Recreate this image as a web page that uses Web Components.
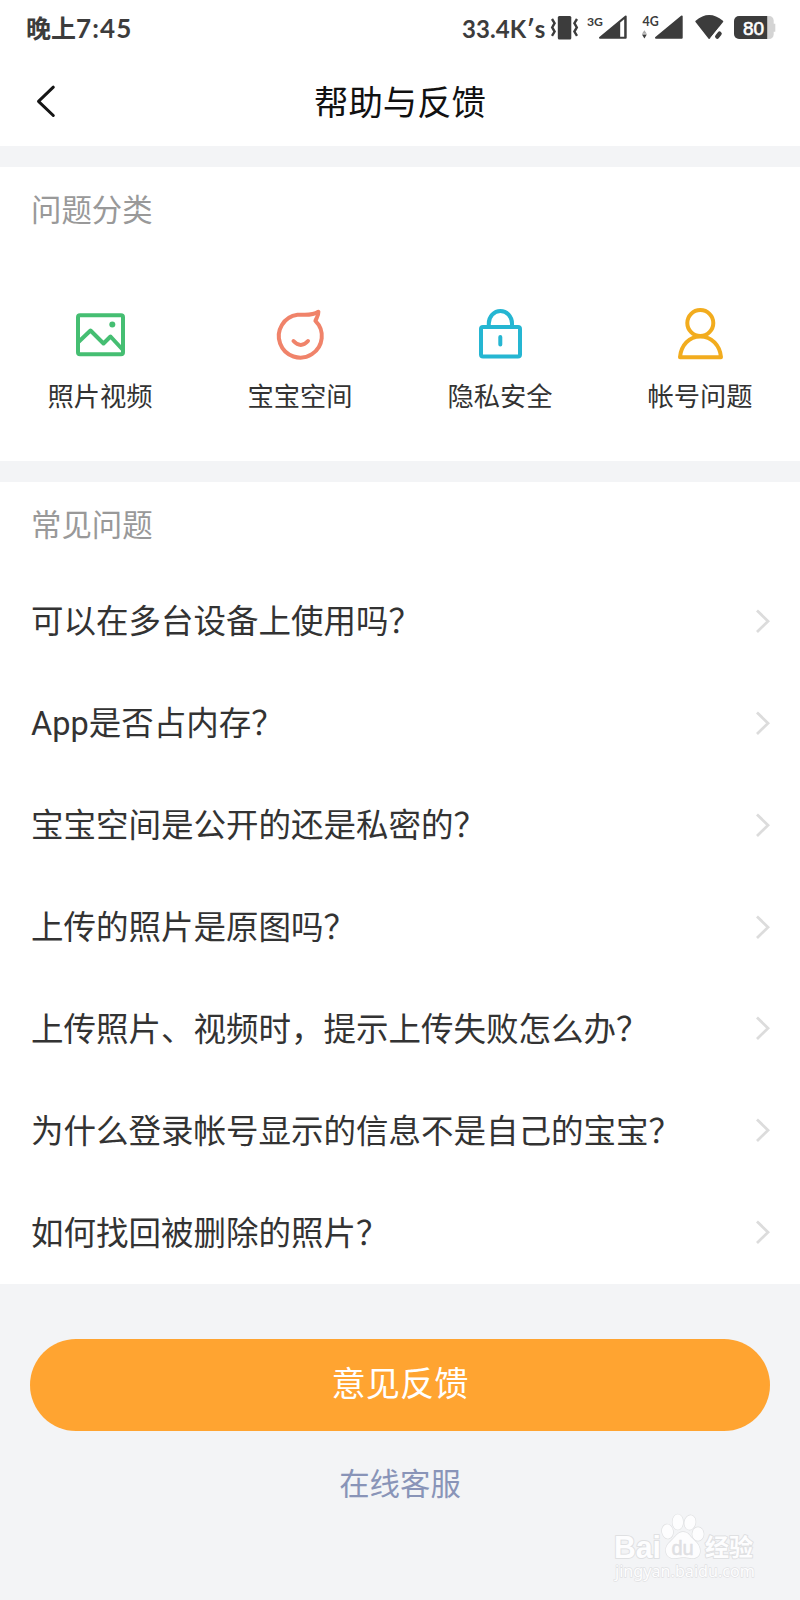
<!DOCTYPE html>
<html lang="zh-CN">
<head>
<meta charset="utf-8">
<title>帮助与反馈</title>
<style>
body{margin:0;background:#f3f4f6;font-family:Roboto,"Noto Sans CJK SC",sans-serif;color:#333}
</style>
</head>
<body>
<help-page></help-page>
<script>
const define = (name, html) => {
  const t = document.createElement('template');
  t.innerHTML = html;
  customElements.define(name, class extends HTMLElement {
    constructor() {
      super();
      this.attachShadow({mode: 'open'}).append(t.content.cloneNode(true));
    }
  });
};

define('status-bar', `
<style>
:host{display:flex;height:57px;align-items:center;box-sizing:border-box;padding-left:26px;color:#3c3c3c;background:#fff}
.time{font:700 25px/57px Lato,"Noto Sans CJK SC",sans-serif;white-space:nowrap;flex:1}
.time b{font-weight:700;font-size:26px;letter-spacing:1.1px}
.rate{font:700 24px/57px Lato,sans-serif;letter-spacing:.1px;width:84px;white-space:nowrap}
svg{display:block}
</style>
<div class="time">晚上<b>7:45</b></div>
<div class="rate">33.4K′s</div>
<svg width="254" height="57" viewBox="546 0 254 57" fill="#3c3c3c">
  <rect x="557.8" y="16" width="13.5" height="23.5" rx="1.5"/>
  <path d="M552 19l2.6 4.2-2.4 4.2 2.4 4.2-2.6 4.2M577 19l-2.6 4.2 2.4 4.2-2.4 4.2 2.6 4.2" fill="none" stroke="#3c3c3c" stroke-width="2.4"/>
  <text x="587" y="26" font-family="Lato" font-weight="700" font-size="12.2">3G</text>
  <path d="M600 37.7L625.7 16.5V37.7Z" stroke="#3c3c3c" stroke-width="2" stroke-linejoin="round"/>
  <path d="M620.2 22.4l4-3.2v17.6h-4z" fill="#fff"/>
  <text x="642.5" y="26" font-family="Lato" font-weight="700" font-size="12.4">4G</text>
  <path d="M642 33.8l2.4-3.5 2.4 3.5z" fill="#aaa"/><path d="M642 34.5h4.8l-2.4 4z"/>
  <path d="M656 37.7L681.7 16.5V37.7Z" stroke="#3c3c3c" stroke-width="2" stroke-linejoin="round"/>
  <path d="M696.3 21.5Q709 10.5 722.3 21.5L709.2 38Z" stroke="#3c3c3c" stroke-width="2" stroke-linejoin="round"/>
  <path d="M714 40.5l9-11" stroke="#fff" stroke-width="9"/>
  <path d="M717.2 36.6l2.4-3" stroke="#3c3c3c" stroke-width="4.3" stroke-linecap="round"/>
  <path d="M766 16h3a5 5 0 0 1 4.7 4.5v3.2h1.6v8h-1.6v2.8a5 5 0 0 1-4.7 4.5h-3z" fill="#d4d4d4"/>
  <path d="M739 16h28.2v23H739a5 5 0 0 1-5-5V21a5 5 0 0 1 5-5z"/>
  <text x="743" y="34.7" font-family="Liberation Sans" font-size="19" fill="#fff" stroke="#fff" stroke-width=".6" textLength="21">80</text>
</svg>`);

define('nav-bar', `
<style>
:host{display:grid;grid-template-columns:80px 1fr 80px;align-items:center;height:89px;background:#fff;color:#111}
h1{margin:0;text-align:center;font-weight:400;font-size:34.4px;line-height:85px;padding-top:4px}
svg{display:block;margin-left:34px}
</style>
<svg width="24" height="36" viewBox="34 84 24 36" fill="none" stroke="#151515" stroke-width="3" stroke-linecap="round" stroke-linejoin="round"><path d="M53.3 87.2L38.5 101.3L53.3 115.5"/></svg>
<h1><slot></slot></h1>`);

define('page-section', `
<style>
:host{display:block;background:#fff;margin-top:21px}
h2{margin:0;padding-left:31px;font-weight:400;font-size:30.4px;color:#999;line-height:88px;height:89px}
</style>
<h2><slot name="title"></slot></h2><slot></slot>`);

define('category-grid', `
<style>:host{display:grid;grid-template-columns:repeat(4,1fr);height:205px;box-sizing:border-box;padding-top:48px}</style><slot></slot>`);

define('category-item', `
<style>
:host{display:flex;flex-direction:column;align-items:center;font-size:26.3px;line-height:40px;gap:13px}
::slotted(svg){display:block;width:60px;height:60px;fill:none;stroke-width:4;stroke-linecap:round;stroke-linejoin:round}
</style>
<slot name="icon"></slot><span><slot></slot></span>`);

define('question-row', `
<style>
:host{display:flex;align-items:center;justify-content:space-between;height:101.86px;padding:0 29px 0 31px;font-size:32.5px;line-height:50px;white-space:nowrap}
span{padding-top:1px}
svg{display:block;margin-bottom:2px}
</style>
<span><slot></slot></span>
<svg width="16" height="26" viewBox="0 0 16 26" fill="none" stroke="#dcdcdc" stroke-width="2.8"><path d="M2 2.5L13 13.2L2 24"/></svg>`);

define('feedback-actions', `
<style>
:host{display:flex;flex-direction:column;align-items:stretch;padding:55px 30px 0;text-align:center}
button{height:92px;border:0;border-radius:46px;background:#ffa431;color:#fff;font-family:inherit;font-size:34.2px;line-height:88px;padding:0 0 3px}
a{color:#8994b8;font-size:30.4px;line-height:48px;margin-top:30px}
</style>
<button><slot name="primary"></slot></button><a><slot name="link"></slot></a>`);

define('site-watermark', `
<style>:host{position:absolute;left:600px;top:1500px}svg{display:block}</style>
<svg width="170" height="90" viewBox="600 1500 170 90" fill="#fdfdfe" stroke="#dfe0e2" stroke-width="2" stroke-linejoin="round" paint-order="stroke">
  <text x="614" y="1558" font-family="Liberation Sans" font-weight="700" font-size="31" textLength="47" lengthAdjust="spacingAndGlyphs">Bai</text>
  <g stroke-width="1.3">
    <ellipse cx="667.5" cy="1531.5" rx="5.5" ry="7.2" transform="rotate(-10 667.5 1531.5)"/>
    <ellipse cx="677.8" cy="1522" rx="5.3" ry="7.7"/>
    <ellipse cx="690" cy="1522.5" rx="5.5" ry="7.3" transform="rotate(10 690 1522.5)"/>
    <ellipse cx="698" cy="1534" rx="5.7" ry="6.8"/>
    <path d="M683 1532c-5 0-7 4-10 7-4 4-8 7-7 13s7 7 11 6c5-1 8-1 13 0 5 1 10-1 10-7s-4-9-8-13c-3-3-4-6-9-6z"/>
  </g>
  <text x="671.5" y="1555" font-family="Liberation Sans" font-size="20" fill="#dfe0e3" stroke="#dfe0e3" stroke-width=".5">du</text>
  <text x="705" y="1556" font-family="Noto Sans CJK SC" font-weight="700" font-size="24">经验</text>
  <text x="615" y="1577" font-family="Noto Sans" font-size="17" textLength="140" lengthAdjust="spacingAndGlyphs" stroke-width="1.3">jingyan.baidu.com</text>
</svg>`);

define('help-page', `
<style>:host{display:block;position:relative;width:800px;height:1600px;overflow:hidden;background:#f3f4f6}</style>
<status-bar></status-bar>
<nav-bar>帮助与反馈</nav-bar>
<page-section><span slot="title">问题分类</span>
<category-grid>
  <category-item><svg slot="icon" viewBox="70 304 60 60" stroke="#45be72"><rect x="78" y="315.2" width="45" height="39" rx="2"/><path d="M79 341.5L90.5 330.5L103.5 343.5L110.5 336.5L122.5 349.5"/><circle cx="112.3" cy="324.5" r="3" fill="#45be72" stroke="none"/></svg>照片视频</category-item>
  <category-item><svg slot="icon" viewBox="270 304 60 60" stroke="#f0836a"><path d="M315.4 320.8A21.5 21.5 0 1 1 297.5 314.8C305 314.5 311.5 316.3 318.4 311.8C318.6 315.2 316.6 318 315.4 320.8Z"/><path d="M293.5 341Q300.8 349 308 341"/></svg>宝宝空间</category-item>
  <category-item><svg slot="icon" viewBox="470 304 60 60" stroke="#25b6d2"><rect x="481" y="327" width="39" height="29.5" rx="2"/><path d="M488.8 326.5V323.5A11.6 12.4 0 0 1 512 323.5V326.5M500.3 337V344.5"/></svg>隐私安全</category-item>
  <category-item><svg slot="icon" viewBox="670 304 60 60" stroke="#f2ac1e"><circle cx="700.3" cy="323" r="13"/><path d="M680 357.2C681 345.5 689 336.5 700.3 336.5S720 345.5 721 357.2Z"/></svg>帐号问题</category-item>
</category-grid></page-section>
<page-section><span slot="title">常见问题</span>
  <question-row>可以在多台设备上使用吗？</question-row>
  <question-row>App是否占内存？</question-row>
  <question-row>宝宝空间是公开的还是私密的？</question-row>
  <question-row>上传的照片是原图吗？</question-row>
  <question-row>上传照片、视频时，提示上传失败怎么办？</question-row>
  <question-row>为什么登录帐号显示的信息不是自己的宝宝？</question-row>
  <question-row>如何找回被删除的照片？</question-row>
</page-section>
<feedback-actions><span slot="primary">意见反馈</span><span slot="link">在线客服</span></feedback-actions>
<site-watermark></site-watermark>`);
</script>
</body>
</html>
